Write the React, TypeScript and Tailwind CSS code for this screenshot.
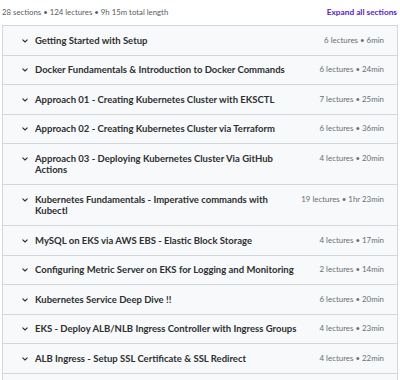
import React from "react";

const sections: [string, string][] = [
  ["Getting Started with Setup", "6 lectures • 6min"],
  ["Docker Fundamentals & Introduction to Docker Commands", "6 lectures • 24min"],
  ["Approach 01 - Creating Kubernetes Cluster with EKSCTL", "7 lectures • 25min"],
  ["Approach 02 - Creating Kubernetes Cluster via Terraform", "6 lectures • 36min"],
  ["Approach 03 - Deploying Kubernetes Cluster Via GitHub Actions", "4 lectures • 20min"],
  ["Kubernetes Fundamentals - Imperative commands with Kubectl", "19 lectures • 1hr 23min"],
  ["MySQL on EKS via AWS EBS - Elastic Block Storage", "4 lectures • 17min"],
  ["Configuring Metric Server on EKS for Logging and Monitoring", "2 lectures • 14min"],
  ["Kubernetes Service Deep Dive !!", "6 lectures • 20min"],
  ["EKS - Deploy ALB/NLB Ingress Controller with Ingress Groups", "4 lectures • 23min"],
  ["ALB Ingress - Setup SSL Certificate & SSL Redirect", "4 lectures • 22min"],
];

function Chevron() {
  return (
    <svg width="8" height="8" viewBox="0 0 8 8" className="shrink-0 mt-[2px]">
      <polyline points="1.8,2.8 4,5 6.2,2.8" fill="none" stroke="#2d2f31" strokeWidth="1.1" strokeLinecap="round" strokeLinejoin="round" />
    </svg>
  );
}

export default function App() {
  return (
    <div className="w-[400px] h-[380px] overflow-hidden bg-white text-[#2d2f31]" style={{ fontFamily: "Lato, 'Noto Sans', sans-serif" }}>
      <div className="flex items-center justify-between pl-[2px] pr-[3px] h-[25px]">
        <span className="text-[7.8px] text-[#595d61]">28 sections • 124 lectures • 9h 15m total length</span>
        <span className="font-bold text-[8.3px] text-[#5624d0]">Expand all sections</span>
      </div>
      <div className="ml-[2px] w-[396px] border border-[#d1d7dc]">
        {sections.map(([t, m], i) => (
          <div key={i} className={"flex items-start bg-[#f7f9fa] pl-[18px] pr-[13px] py-[8.5px] " + (i > 0 ? "border-t border-[#d1d7dc]" : "")}>
            <Chevron />
            <div className="ml-[6px] flex-1 font-bold text-[9.5px] leading-[11.5px]">{t}</div>
            <div className="ml-[14px] shrink-0 text-[7.9px] leading-[11.5px] text-[#6a6f73]">{m}</div>
          </div>
        ))}
        <div className="h-[30px] bg-[#f7f9fa] border-t border-[#d1d7dc]" />
      </div>
    </div>
  );
}
